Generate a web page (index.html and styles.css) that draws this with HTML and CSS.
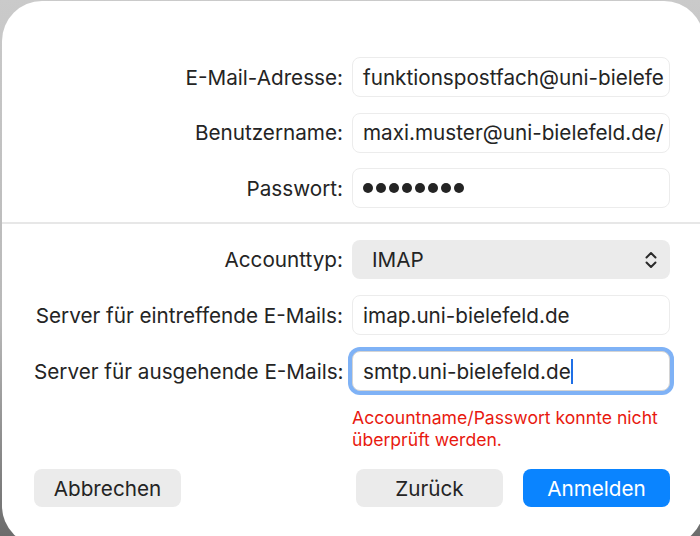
FILE: index.html
```html
<!DOCTYPE html>
<html lang="de">

<head>
    <meta charset="UTF-8">
    <meta name="viewport" content="width=device-width, initial-scale=1.0">
    <title>Account hinzufügen</title>
    <link rel="stylesheet" href="styles.css">
</head>

<body>
    <div class="dialog">
        <div class="fields fields-top">
            <label class="label">E-Mail-Adresse:</label>
            <div class="field"><span class="value">funktionspostfach@uni-bielefe</span></div>

            <label class="label">Benutzername:</label>
            <div class="field"><span class="value">maxi.muster@uni-bielefeld.de/</span></div>

            <label class="label">Passwort:</label>
            <div class="field">
                <span class="dots">
                    <i></i><i></i><i></i><i></i><i></i><i></i><i></i><i></i>
                </span>
            </div>
        </div>

        <div class="divider"></div>

        <div class="fields fields-server">
            <label class="label">Accounttyp:</label>
            <div class="select">
                <span>IMAP</span>
                <svg class="chevrons" width="14" height="20" viewBox="0 0 14 20">
                    <path d="M2.5 7.5 L7 3 L11.5 7.5" />
                    <path d="M2.5 12.5 L7 17 L11.5 12.5" />
                </svg>
            </div>

            <label class="label">Server für eintreffende E-Mails:</label>
            <div class="field"><span class="value">imap.uni-bielefeld.de</span></div>

            <label class="label">Server für ausgehende E-Mails:</label>
            <div class="field focused"><span class="value">smtp.uni-bielefeld.de<span class="caret"></span></span></div>

            <div></div>
            <p class="error">Accountname/Passwort konnte nicht überprüft werden.</p>
        </div>

        <div class="actions">
            <button class="button">Abbrechen</button>
            <div class="actions-right">
                <button class="button">Zurück</button>
                <button class="button primary">Anmelden</button>
            </div>
        </div>
    </div>
</body>

</html>
```

FILE: styles.css
```css
html,
body {
    margin: 0;
    height: 536px;
    overflow: hidden;
}

body {
    background: linear-gradient(180deg, #cacaca 0%, #b8b8b8 60%, #6c6c6c 100%);
    font-family: Inter, 'Open Sans', sans-serif;
    color: #242424;
}

.dialog {
    margin: 1px 0 0 2px;
    width: 702px;
    height: 545px;
    background-color: #fff;
    border-radius: 40px;
    box-sizing: border-box;
    padding-top: 56px;
}

.fields {
    display: grid;
    grid-template-columns: 309px 318px;
    column-gap: 9px;
    row-gap: 15.5px;
    align-items: center;
    padding-left: 32px;
}

.fields-server {
    row-gap: 16px;
}

.label {
    text-align: right;
    font-size: 20.7px;
    white-space: nowrap;
}

.field {
    height: 40px;
    box-sizing: border-box;
    border: 1px solid #ececec;
    border-radius: 8px;
    padding: 0 4px 0 10px;
    display: flex;
    align-items: center;
    font-size: 20.7px;
    background-color: #fff;
}

.value {
    display: flex;
    align-items: center;
    white-space: nowrap;
}

.field.focused {
    border: 1px solid #d4d4d4;
    box-shadow: 0 0 0 4px #7fb2f6;
}

.caret {
    display: inline-block;
    width: 2px;
    height: 25px;
    background-color: #1f6fe6;
}

.dots {
    display: flex;
    gap: 3px;
}

.dots i {
    display: block;
    width: 10px;
    height: 10px;
    border-radius: 50%;
    background-color: #242424;
}

.divider {
    height: 2px;
    background-color: #e7e7e7;
    margin: 14px 0 16px;
}

.select {
    height: 39px;
    border-radius: 8px;
    background-color: #ebebeb;
    display: flex;
    align-items: center;
    justify-content: space-between;
    padding: 0 12px 0 20px;
    font-size: 20.7px;
}

.chevrons path {
    fill: none;
    stroke: #2a2a2a;
    stroke-width: 2;
    stroke-linecap: round;
    stroke-linejoin: round;
}

.error {
    margin: 0;
    color: #e8190f;
    font-size: 17.6px;
    line-height: 22px;
    padding-right: 4px;
}

.actions {
    display: flex;
    justify-content: space-between;
    padding: 0 34px 0 32px;
    margin-top: 18px;
}

.actions-right {
    display: flex;
    gap: 20px;
}

.button {
    font-family: inherit;
    font-size: 20.7px;
    color: #242424;
    background-color: #ebebeb;
    border: none;
    border-radius: 8px;
    height: 38px;
    width: 147px;
}

.button.primary {
    background-color: #0a84ff;
    color: #fff;
}
```
